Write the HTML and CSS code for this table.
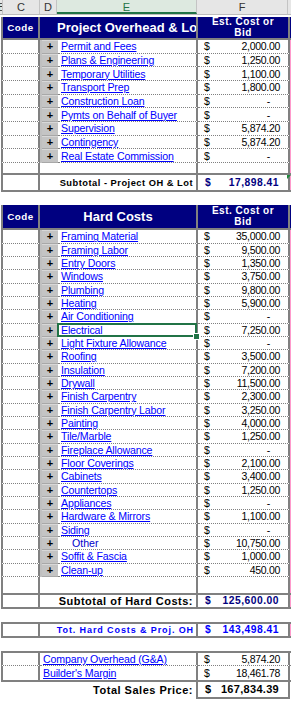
FILE: index.html
```html
<!DOCTYPE html>
<html>
<head>
<meta charset="utf-8">
<link rel="stylesheet" href="styles.css">
</head>
<body>
<div class="sheet">
  <div class="colhead">
    <div class="ch chB"><span>B</span></div>
    <div class="ch">C</div>
    <div class="ch">D</div>
    <div class="ch chE">E</div>
    <div class="ch">F</div>
    <div class="ch chG"></div>
  </div>

  <div class="row head h1">
    <div class="b"></div>
    <div class="c navy code">Code</div>
    <div class="de navy title left">Project Overhead &amp; Lot</div>
    <div class="f navy est">Est. Cost or<br>Bid</div>
    <div class="g navy"></div>
  </div>

  <div class="row data r1"><div class="b"></div><div class="c"></div><div class="d"><span class="btn">+</span></div><div class="e"><span class="link">Permit and Fees</span></div><div class="f"><span>$</span><span>2,000.00</span></div><div class="g"></div></div>
  <div class="row data r1"><div class="b"></div><div class="c"></div><div class="d"><span class="btn">+</span></div><div class="e"><span class="link">Plans &amp; Engineering</span></div><div class="f"><span>$</span><span>1,250.00</span></div><div class="g"></div></div>
  <div class="row data r1"><div class="b"></div><div class="c"></div><div class="d"><span class="btn">+</span></div><div class="e"><span class="link">Temporary Utilities</span></div><div class="f"><span>$</span><span>1,100.00</span></div><div class="g"></div></div>
  <div class="row data r1"><div class="b"></div><div class="c"></div><div class="d"><span class="btn">+</span></div><div class="e"><span class="link">Transport Prep</span></div><div class="f"><span>$</span><span>1,800.00</span></div><div class="g"></div></div>
  <div class="row data r1"><div class="b"></div><div class="c"></div><div class="d"><span class="btn">+</span></div><div class="e"><span class="link">Construction Loan</span></div><div class="f"><span>$</span><span class="dash">-</span></div><div class="g"></div></div>
  <div class="row data r1"><div class="b"></div><div class="c"></div><div class="d"><span class="btn">+</span></div><div class="e"><span class="link">Pymts on Behalf of Buyer</span></div><div class="f"><span>$</span><span class="dash">-</span></div><div class="g"></div></div>
  <div class="row data r1"><div class="b"></div><div class="c"></div><div class="d"><span class="btn">+</span></div><div class="e"><span class="link">Supervision</span></div><div class="f"><span>$</span><span>5,874.20</span></div><div class="g"></div></div>
  <div class="row data r1"><div class="b"></div><div class="c"></div><div class="d"><span class="btn">+</span></div><div class="e"><span class="link">Contingency</span></div><div class="f"><span>$</span><span>5,874.20</span></div><div class="g"></div></div>
  <div class="row data r1"><div class="b"></div><div class="c"></div><div class="d"><span class="btn">+</span></div><div class="e"><span class="link">Real Estate Commission</span></div><div class="f"><span>$</span><span class="dash">-</span></div><div class="g"></div></div>

  <div class="row empty e1"><div class="b"></div><div class="c"></div><div class="d"></div><div class="e"></div><div class="f"></div><div class="g"></div></div>

  <div class="row sub sub1">
    <div class="b"></div>
    <div class="c"></div>
    <div class="de lbl-sm">Subtotal - Project OH &amp; Lot</div>
    <div class="f val navyt"><span>$</span><span>17,898.41</span></div>
    <div class="g tri"></div>
  </div>

  <div class="gap g1"></div>

  <div class="row head h2">
    <div class="b"></div>
    <div class="c navy code">Code</div>
    <div class="de navy title">Hard Costs</div>
    <div class="f navy est">Est. Cost or<br>Bid</div>
    <div class="g navy"></div>
  </div>

  <div class="row data r2"><div class="b"></div><div class="c"></div><div class="d"><span class="btn">+</span></div><div class="e"><span class="link">Framing Material</span></div><div class="f"><span>$</span><span>35,000.00</span></div><div class="g"></div></div>
  <div class="row data r2"><div class="b"></div><div class="c"></div><div class="d"><span class="btn">+</span></div><div class="e"><span class="link">Framing Labor</span></div><div class="f"><span>$</span><span>9,500.00</span></div><div class="g"></div></div>
  <div class="row data r2"><div class="b"></div><div class="c"></div><div class="d"><span class="btn">+</span></div><div class="e"><span class="link">Entry Doors</span></div><div class="f"><span>$</span><span>1,350.00</span></div><div class="g"></div></div>
  <div class="row data r2"><div class="b"></div><div class="c"></div><div class="d"><span class="btn">+</span></div><div class="e"><span class="link">Windows</span></div><div class="f"><span>$</span><span>3,750.00</span></div><div class="g"></div></div>
  <div class="row data r2"><div class="b"></div><div class="c"></div><div class="d"><span class="btn">+</span></div><div class="e"><span class="link">Plumbing</span></div><div class="f"><span>$</span><span>9,800.00</span></div><div class="g"></div></div>
  <div class="row data r2"><div class="b"></div><div class="c"></div><div class="d"><span class="btn">+</span></div><div class="e"><span class="link">Heating</span></div><div class="f"><span>$</span><span>5,900.00</span></div><div class="g"></div></div>
  <div class="row data r2"><div class="b"></div><div class="c"></div><div class="d"><span class="btn">+</span></div><div class="e"><span class="link">Air Conditioning</span></div><div class="f"><span>$</span><span class="dash">-</span></div><div class="g"></div></div>
  <div class="row data r2"><div class="b"></div><div class="c"></div><div class="d"><span class="btn">+</span></div><div class="e active"><span class="link">Electrical</span></div><div class="f"><span>$</span><span>7,250.00</span></div><div class="g"></div></div>
  <div class="row data r2"><div class="b"></div><div class="c"></div><div class="d"><span class="btn">+</span></div><div class="e"><span class="link">Light Fixture Allowance</span></div><div class="f"><span>$</span><span class="dash">-</span></div><div class="g"></div></div>
  <div class="row data r2"><div class="b"></div><div class="c"></div><div class="d"><span class="btn">+</span></div><div class="e"><span class="link">Roofing</span></div><div class="f"><span>$</span><span>3,500.00</span></div><div class="g"></div></div>
  <div class="row data r2"><div class="b"></div><div class="c"></div><div class="d"><span class="btn">+</span></div><div class="e"><span class="link">Insulation</span></div><div class="f"><span>$</span><span>7,200.00</span></div><div class="g"></div></div>
  <div class="row data r2"><div class="b"></div><div class="c"></div><div class="d"><span class="btn">+</span></div><div class="e"><span class="link">Drywall</span></div><div class="f"><span>$</span><span>11,500.00</span></div><div class="g"></div></div>
  <div class="row data r2"><div class="b"></div><div class="c"></div><div class="d"><span class="btn">+</span></div><div class="e"><span class="link">Finish Carpentry</span></div><div class="f"><span>$</span><span>2,300.00</span></div><div class="g"></div></div>
  <div class="row data r2"><div class="b"></div><div class="c"></div><div class="d"><span class="btn">+</span></div><div class="e"><span class="link">Finish Carpentry Labor</span></div><div class="f"><span>$</span><span>3,250.00</span></div><div class="g"></div></div>
  <div class="row data r2"><div class="b"></div><div class="c"></div><div class="d"><span class="btn">+</span></div><div class="e"><span class="link">Painting</span></div><div class="f"><span>$</span><span>4,000.00</span></div><div class="g"></div></div>
  <div class="row data r2"><div class="b"></div><div class="c"></div><div class="d"><span class="btn">+</span></div><div class="e"><span class="link">Tile/Marble</span></div><div class="f"><span>$</span><span>1,250.00</span></div><div class="g"></div></div>
  <div class="row data r2"><div class="b"></div><div class="c"></div><div class="d"><span class="btn">+</span></div><div class="e"><span class="link">Fireplace Allowance</span></div><div class="f"><span>$</span><span class="dash">-</span></div><div class="g"></div></div>
  <div class="row data r2"><div class="b"></div><div class="c"></div><div class="d"><span class="btn">+</span></div><div class="e"><span class="link">Floor Coverings</span></div><div class="f"><span>$</span><span>2,100.00</span></div><div class="g"></div></div>
  <div class="row data r2"><div class="b"></div><div class="c"></div><div class="d"><span class="btn">+</span></div><div class="e"><span class="link">Cabinets</span></div><div class="f"><span>$</span><span>3,400.00</span></div><div class="g"></div></div>
  <div class="row data r2"><div class="b"></div><div class="c"></div><div class="d"><span class="btn">+</span></div><div class="e"><span class="link">Countertops</span></div><div class="f"><span>$</span><span>1,250.00</span></div><div class="g"></div></div>
  <div class="row data r2"><div class="b"></div><div class="c"></div><div class="d"><span class="btn">+</span></div><div class="e"><span class="link">Appliances</span></div><div class="f"><span>$</span><span class="dash">-</span></div><div class="g"></div></div>
  <div class="row data r2"><div class="b"></div><div class="c"></div><div class="d"><span class="btn">+</span></div><div class="e"><span class="link">Hardware &amp; Mirrors</span></div><div class="f"><span>$</span><span>1,100.00</span></div><div class="g"></div></div>
  <div class="row data r2"><div class="b"></div><div class="c"></div><div class="d"><span class="btn">+</span></div><div class="e"><span class="link">Siding</span></div><div class="f"><span>$</span><span class="dash">-</span></div><div class="g"></div></div>
  <div class="row data r2"><div class="b"></div><div class="c"></div><div class="d"><span class="btn">+</span></div><div class="e"><span class="other">Other</span></div><div class="f"><span>$</span><span>10,750.00</span></div><div class="g"></div></div>
  <div class="row data r2"><div class="b"></div><div class="c"></div><div class="d"><span class="btn">+</span></div><div class="e"><span class="link">Soffit &amp; Fascia</span></div><div class="f"><span>$</span><span>1,000.00</span></div><div class="g"></div></div>
  <div class="row data r2"><div class="b"></div><div class="c"></div><div class="d"><span class="btn">+</span></div><div class="e"><span class="link">Clean-up</span></div><div class="f"><span>$</span><span>450.00</span></div><div class="g"></div></div>

  <div class="row empty e2"><div class="b"></div><div class="c"></div><div class="d"></div><div class="e"></div><div class="f"></div><div class="g"></div></div>

  <div class="row sub sub2">
    <div class="b"></div>
    <div class="c"></div>
    <div class="de lbl-lg">Subtotal of Hard Costs:</div>
    <div class="f val navyt"><span>$</span><span>125,600.00</span></div>
    <div class="g"></div>
  </div>

  <div class="gap g2"></div>

  <div class="row sub tot">
    <div class="b"></div>
    <div class="c"></div>
    <div class="de lbl-tot">Tot. Hard Costs &amp; Proj. OH</div>
    <div class="f val bluet"><span>$</span><span>143,498.41</span></div>
    <div class="g"></div>
  </div>

  <div class="gap g3"></div>

  <div class="row oh oh1">
    <div class="b"></div>
    <div class="c"></div>
    <div class="de"><span class="link">Company Overhead (G&amp;A)</span></div>
    <div class="f"><span>$</span><span>5,874.20</span></div>
    <div class="g"></div>
  </div>
  <div class="row oh oh2">
    <div class="b"></div>
    <div class="c"></div>
    <div class="de"><span class="link">Builder's Margin</span></div>
    <div class="f"><span>$</span><span>18,461.78</span></div>
    <div class="g"></div>
  </div>

  <div class="row total">
    <div class="b"></div>
    <div class="c"></div>
    <div class="de lbl-lg">Total Sales Price:</div>
    <div class="f val"><span>$</span><span>167,834.39</span></div>
    <div class="g"></div>
  </div>
</div>
</body>
</html>
```

FILE: styles.css
```css
* { box-sizing: border-box; margin: 0; padding: 0; }
html, body { background: #fff; }
body {
  margin: 0;
  width: 291px;
  height: 708px;
  overflow: hidden;
  font-family: "Liberation Sans", Arial, sans-serif;
  color: #000;
}
.sheet { width: 291px; }

/* column letters */
.colhead {
  display: grid;
  grid-template-columns: 3px 37px 17px 140px 91px 3px;
  height: 15px;
  background: #e6e6e6;
  border-bottom: 1px solid #bdbdbd;
}
.ch {
  border-right: 1px solid #c4c4c4;
  font-size: 11px;
  line-height: 14px;
  color: #333;
  text-align: center;
  overflow: hidden;
}
.chB { display: flex; justify-content: flex-end; }
.chB span { flex: none; margin-right: -3px; }
.chE {
  background: #dde9e0;
  color: #217346;
  border-bottom: 2px solid #217346;
}
.chG { border-right: none; }

/* grid rows */
.row {
  display: grid;
  grid-template-columns: 1px 39px 18px 140px 92px 1px;
  grid-template-rows: 100%;
}
.row > div { min-height: 0; overflow: hidden; }
.row > .e.active, .row > .g.tri { overflow: visible; }
.row > .de { grid-column: span 2; }
.c { border-left: 2px solid #808080; border-right: 2px solid #808080; }
.e, .de { border-right: 2px solid #808080; }
.f { border-right: 2px solid #808080; }
.g { background: #ff99cc; }
.e, .de { display: flex; align-items: center; justify-content: flex-end; }

/* headers */
.head { margin-top: 2px; }
.head > div { border-bottom: 2px solid #808080; }
.head > .b { border-bottom: none; }
.h1 { height: 23px; }
.h2 { height: 25px; }
.navy { background: #000080; color: #fff; }
.g.navy { background: #000080; }
.row > .code {
  font-size: 9.8px;
  font-weight: bold;
  letter-spacing: 0.5px;
  display: flex;
  align-items: center;
  justify-content: center;
}
.row > .title {
  font-size: 13px;
  font-weight: bold;
  justify-content: center;
  white-space: nowrap;
}
.row > .title.left { justify-content: flex-start; padding-left: 17px; }
.row > .est {
  font-size: 10px;
  font-weight: bold;
  letter-spacing: 0.5px;
  line-height: 10.6px;
  text-align: center;
  justify-content: center;
  padding: 0;
}

/* data rows */
.r1 { height: 13.66px; }
.r2 { height: 13.33px; }
.data .c, .data .e, .data .f { border-bottom: 1px dotted #808080; }
.d { display: flex; align-items: stretch; }
.data .d { background: #c0c0c0; padding-left: 2px; }
.btn {
  flex: 1;
  display: flex;
  align-items: center;
  justify-content: center;
  font-size: 11px;
  font-weight: bold;
  color: #000;
  line-height: 1;
  background: #c4c4c4;
  border-top: 1px solid #d8d8d8;
  border-bottom: 1px solid #a8a8a8;
}
.row > .e { justify-content: flex-start; }
.link {
  color: #0000ff;
  text-decoration: underline;
  font-size: 10.6px;
  letter-spacing: -0.15px;
  padding-left: 3px;
  white-space: nowrap;
}
.other {
  color: #0000cc;
  font-size: 10.6px;
  padding-left: 14px;
}
.f {
  display: flex;
  align-items: center;
  justify-content: space-between;
  padding: 0 8px 0 6px;
  font-size: 10.5px;
  letter-spacing: -0.3px;
  white-space: nowrap;
}
.dash { margin-right: 10px; }

/* active cell */
.active { position: relative; }
.active::after {
  content: "";
  position: absolute;
  left: -1px; top: -1px; right: -1px; bottom: -1px;
  border: 2px solid #217346;
}
.active::before {
  content: "";
  position: absolute;
  right: -4px; bottom: -4px;
  width: 5px; height: 5px;
  background: #217346;
  border: 1px solid #fff;
  z-index: 2;
}

/* empty rows */
.e1 { height: 10.4px; }
.e2 { height: 15.7px; }

/* subtotal boxes */
.sub > div { border-top: 2px solid #808080; border-bottom: 2px solid #808080; }
.sub > .b { border: none; }
.sub1 { height: 19px; }
.sub2 { height: 16px; }
.tot { height: 16px; }
.lbl-sm {
  font-size: 9.3px;
  font-weight: bold;
  letter-spacing: 0.5px;
  padding-right: 3px;
  white-space: nowrap;
}
.lbl-lg {
  font-size: 11px;
  font-weight: bold;
  letter-spacing: 0.5px;
  padding-right: 3px;
  white-space: nowrap;
}
.lbl-tot {
  font-size: 9px;
  font-weight: bold;
  letter-spacing: 0.9px;
  color: #0000ff;
  padding-right: 2px;
  white-space: nowrap;
}
.row > .val {
  font-weight: bold;
  font-size: 10.3px;
  letter-spacing: 0.5px;
  padding: 0 9px 0 7px;
}
.navyt { color: #000080; }
.bluet { color: #0000ff; }
.tri { position: relative; }
.tri::after {
  content: "";
  position: absolute;
  left: -3px; top: 0;
  border-top: 4px solid #1e8a3c;
  border-right: 4px solid transparent;
}

.gap { height: 11px; }
.g1 { height: 11px; }
.g2 { height: 13.2px; }
.g3 { height: 13px; }

/* overhead box */
.oh { height: 15.5px; }
.oh > .g { background: #fff; }
.oh1 > div { border-top: 2px solid #808080; border-bottom: 1px dotted #808080; }
.oh2 > div { border-bottom: 2px solid #808080; }
.oh > .b { border: none; }
.row.oh > .de { justify-content: flex-start; }

/* total sales */
.total { height: 17.5px; }
.total > .c { border: none; }
.total > .de { border-right: 2px solid #808080; }
.total > .f { border-bottom: 2px solid #808080; }
.total > .g { background: #fff; }
.row.total > .val { font-size: 11px; letter-spacing: 0.3px; }
```
